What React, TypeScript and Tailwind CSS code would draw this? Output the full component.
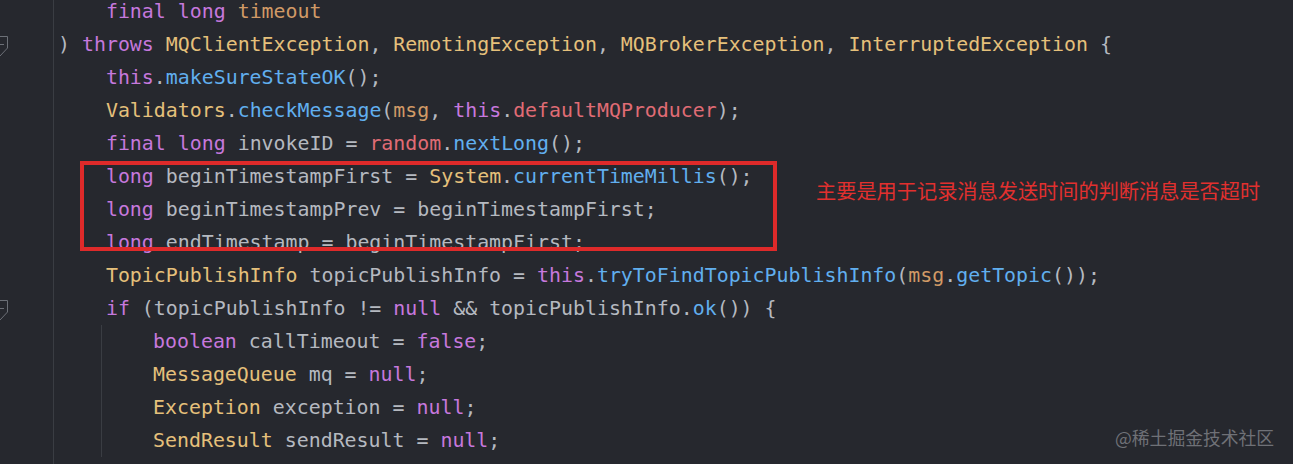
const tone = {
  k: 'text-[#c678dd]',
  t: 'text-[#e5c07b]',
  f: 'text-[#61afef]',
  v: 'text-[#e06c75]',
  p: 'text-[#d19a66]',
  x: 'text-[#b5b9c0]',
} as const;

type Tok = [keyof typeof tone, string];

const head: Tok[][] = [
  [['x', '    '], ['k', 'final'], ['x', ' '], ['k', 'long'], ['x', ' '], ['p', 'timeout']],
  [['x', ') '], ['k', 'throws'], ['x', ' '], ['t', 'MQClientException'], ['x', ', '], ['t', 'RemotingException'], ['x', ', '], ['t', 'MQBrokerException'], ['x', ', '], ['t', 'InterruptedException'], ['x', ' {']],
  [['x', '    '], ['k', 'this'], ['x', '.'], ['f', 'makeSureStateOK'], ['x', '();']],
  [['x', '    '], ['t', 'Validators'], ['x', '.'], ['f', 'checkMessage'], ['x', '('], ['p', 'msg'], ['x', ', '], ['k', 'this'], ['x', '.'], ['v', 'defaultMQProducer'], ['x', ');']],
  [['x', '    '], ['k', 'final'], ['x', ' '], ['k', 'long'], ['x', ' invokeID = '], ['v', 'random'], ['x', '.'], ['f', 'nextLong'], ['x', '();']],
];

const marked: Tok[][] = [
  [['x', '    '], ['k', 'long'], ['x', ' beginTimestampFirst = '], ['t', 'System'], ['x', '.'], ['f', 'currentTimeMillis'], ['x', '();']],
  [['x', '    '], ['k', 'long'], ['x', ' beginTimestampPrev = beginTimestampFirst;']],
  [['x', '    '], ['k', 'long'], ['x', ' endTimestamp = beginTimestampFirst;']],
];

const tail: Tok[][] = [
  [['x', '    '], ['t', 'TopicPublishInfo'], ['x', ' topicPublishInfo = '], ['k', 'this'], ['x', '.'], ['f', 'tryToFindTopicPublishInfo'], ['x', '('], ['p', 'msg'], ['x', '.'], ['f', 'getTopic'], ['x', '());']],
  [['x', '    '], ['k', 'if'], ['x', ' (topicPublishInfo != '], ['k', 'null'], ['x', ' && topicPublishInfo.'], ['f', 'ok'], ['x', '()) {']],
];

const nested: Tok[][] = [
  [['k', 'boolean'], ['x', ' callTimeout = '], ['k', 'false'], ['x', ';']],
  [['t', 'MessageQueue'], ['x', ' mq = '], ['k', 'null'], ['x', ';']],
  [['t', 'Exception'], ['x', ' exception = '], ['k', 'null'], ['x', ';']],
  [['t', 'SendResult'], ['x', ' sendResult = '], ['k', 'null'], ['x', ';']],
];

function Line({ toks }: { toks: Tok[] }) {
  return (
    <div className="h-[33px] whitespace-pre">
      {toks.map(([c, s], i) => (
        <span key={i} className={tone[c]}>
          {s}
        </span>
      ))}
    </div>
  );
}

function Fold() {
  return (
    <svg width="10" height="33" viewBox="0 0 10 33" className="block">
      <path d="M0 8.5 H7.5 V20 L0 28" fill="none" stroke="#6c7077" strokeWidth="1" />
      <path d="M0 16.5 H4" stroke="#6c7077" strokeWidth="1" />
    </svg>
  );
}

export default function App() {
  return (
    <div className="relative h-[464px] w-[1293px] overflow-hidden bg-[#26282e]">
      <div className="flex h-full">
        {/* gutter */}
        <div className="mt-[-5px] w-[53px] shrink-0">
          {Array.from({ length: 14 }).map((_, i) => (
            <div key={i} className="h-[33px]">
              {(i === 1 || i === 9) && <Fold />}
            </div>
          ))}
        </div>

        {/* editor */}
        <div className="flex-1 border-l border-[#3a3d43] pl-[4px]">
          <div className="mt-[-5px] font-['DejaVu_Sans_Mono',monospace] text-[19.9px] leading-[33px]">
            {head.map((t, i) => (
              <Line key={i} toks={t} />
            ))}

            <div className="flex items-start">
              <div className="relative w-[719px] shrink-0">
                {marked.map((t, i) => (
                  <Line key={i} toks={t} />
                ))}
                <div className="absolute left-[22px] right-0 top-[1px] h-[90px] border-4 border-[#de2a2a]" />
              </div>
              <div className="ml-[39px] mt-[17px] whitespace-nowrap font-['Noto_Sans_CJK_SC',sans-serif] text-[20.2px] leading-[28px] text-[#e2302e]">
                主要是用于记录消息发送时间的判断消息是否超时
              </div>
            </div>

            {tail.map((t, i) => (
              <Line key={i} toks={t} />
            ))}
            <div className="ml-[43px] border-l border-[#3a3d43] pl-[51px]">
              {nested.map((t, i) => (
                <Line key={i} toks={t} />
              ))}
            </div>
          </div>
        </div>
      </div>

      {/* watermark */}
      <div className="absolute left-[1115px] top-[425px] font-['Noto_Sans_CJK_SC',sans-serif] text-[17.8px] leading-[24px] text-[#6f7177]">
        @稀土掘金技术社区
      </div>
    </div>
  );
}
